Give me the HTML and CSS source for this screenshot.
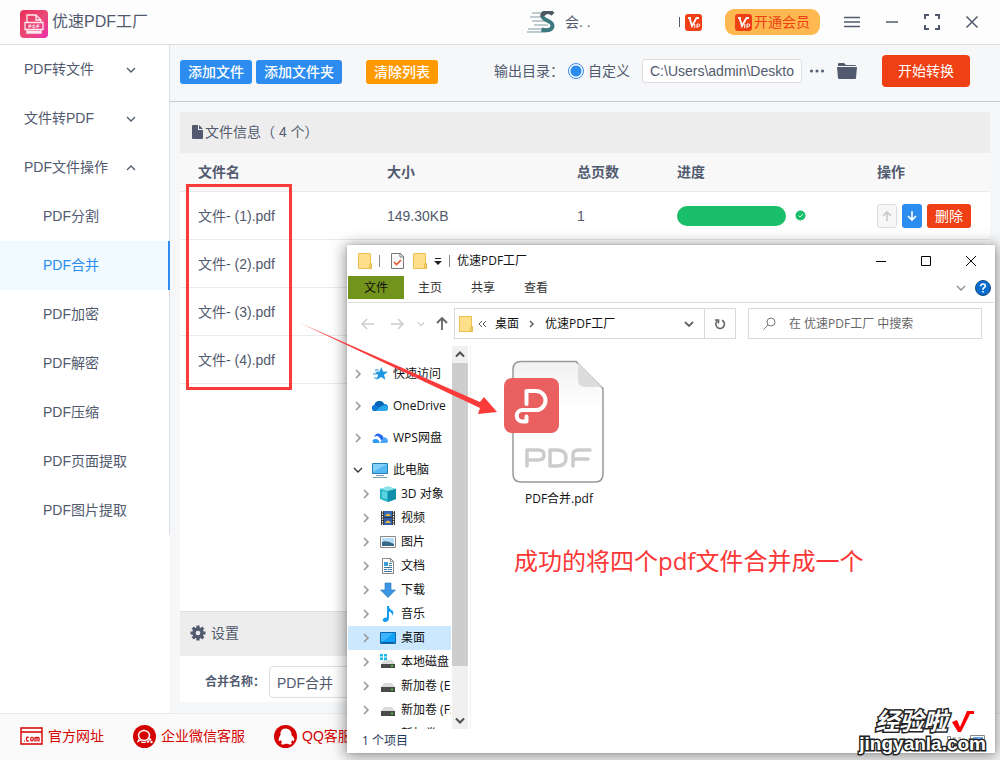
FILE: index.html
```html
<!DOCTYPE html>
<html lang="zh-CN">
<head>
<meta charset="utf-8">
<meta name="viewport" content="width=device-width, initial-scale=1">
<title>优速PDF工厂</title>
<link rel="stylesheet" href="styles.css">
</head>
<body>
<svg class="defs" aria-hidden="true">
  <defs>
    <linearGradient id="logo-bg" x1="0" y1="0" x2="1" y2="1"><stop offset="0" stop-color="#e8305a"/><stop offset=".55" stop-color="#ea4a78"/><stop offset="1" stop-color="#f02cae"/></linearGradient>
    <linearGradient id="paper" x1="0" y1="0" x2="0" y2="1"><stop offset="0" stop-color="#f1f1f1"/><stop offset=".4" stop-color="#fff"/></linearGradient>
    <symbol id="down" viewBox="0 0 10 10"><path d="M1 3l4 4 4-4" fill="none" stroke="currentColor" stroke-width="1.3"/></symbol>
    <symbol id="right" viewBox="0 0 10 10"><path d="M3 1l4 4-4 4" fill="none" stroke="currentColor" stroke-width="1.6"/></symbol>
    <symbol id="folder" viewBox="0 0 14 16"><path d="M.5.5h12v10h1v5H.5z" fill="#ffe08a" stroke="#ecc04f"/><path d="M11.500 11v4h2v-4z" fill="#f5cf68" stroke="#e3b23c" stroke-width=".6"/></symbol>
    <symbol id="vip" viewBox="0 0 17 17"><rect width="17" height="17" rx="3" fill="#ee4014"/><path d="M3 4h3M4.500 4l2.500 8L11.500 4H14" fill="none" stroke="#fff" stroke-width="1.800"/><path d="M9.700 10v4M12 14v-4h1.500a1 1 0 010 2.400H12" fill="none" stroke="#fff" stroke-width="1"/></symbol>
    <symbol id="drive" viewBox="0 0 16 16"><path d="M4 5h8l3 4H1z" fill="#dadada"/><path d="M1 9h14v5H1z" fill="#4a4a4a"/><path d="M11 11.500h2" stroke="#3fe046" stroke-width="1.500"/></symbol>
  </defs>
</svg>
<div class="app">
  <header class="header">
    <svg class="logo" viewBox="0 0 28 28"><rect width="28" height="28" rx="4" fill="url(#logo-bg)"/><g fill="none" stroke="#ffe9ee" stroke-width="1.300"><path d="M7 12V5h9l5 5v2M16 5v5h5M5 12.500h18v7H5zM7 19.500v3.500h14v-3.500M7 21.500h14"/></g><path d="M9 18v-3h2v1.500H9m4-1.500v3c3 0 3-3 0-3m4 3v-3h2.500M17 16.500h2" fill="none" stroke="#fff" stroke-width=".8"/></svg>
    <h1 class="app-name">优速PDF工厂</h1>
    <div class="account">
      <svg class="avatar" viewBox="0 0 28 22"><path d="M5 2h14M3 6h13M5 10h14M7 14h14M1 18h22M0 21h18" stroke="#a9bcc2" stroke-width="1.300"/><path d="M26 3C22-.5 15 1 15.500 5.500c.5 4 10.500 4.500 10 9.500-.4 4.500-6.500 5-11 3.500" fill="none" stroke="#3d7a80" stroke-width="4"/><path d="M26 3C22-.5 15 1 15.500 5.500" fill="none" stroke="#4d5960" stroke-width="4"/></svg>
      <span class="user">会. .</span>
      <span class="user-end"></span>
      <svg class="vip" viewBox="0 0 17 17"><use href="#vip"/></svg>
    </div>
    <button class="member"><svg class="vip" viewBox="0 0 17 17"><use href="#vip"/></svg>开通会员</button>
    <div class="controls">
      <button aria-label="菜单"><svg width="16" height="12" viewBox="0 0 16 12"><path d="M0 1.500h16M0 6h16M0 10.500h16"/></svg></button>
      <button aria-label="最小化"><svg width="14" height="12" viewBox="0 0 14 12"><path d="M1 6h12"/></svg></button>
      <button aria-label="全屏"><svg width="16" height="16" viewBox="0 0 16 16"><path d="M5 1H1v4M11 1h4v4M5 15H1v-4M11 15h4v-4" stroke-width="2"/></svg></button>
      <button aria-label="关闭"><svg width="14" height="14" viewBox="0 0 14 14"><path d="M1.500 1.500l11 11M12.500 1.500l-11 11"/></svg></button>
    </div>
  </header>

  <div class="body">
    <div class="side">
      <nav class="menu">
        <a class="group" href="#">PDF转文件<svg class="chev" viewBox="0 0 10 10"><use href="#down"/></svg></a>
        <a class="group" href="#">文件转PDF<svg class="chev" viewBox="0 0 10 10"><use href="#down"/></svg></a>
        <a class="group" href="#">PDF文件操作<svg class="chev up" viewBox="0 0 10 10"><use href="#down"/></svg></a>
        <a class="item" href="#">PDF分割</a>
        <a class="item active" href="#">PDF合并</a>
        <a class="item" href="#">PDF加密</a>
        <a class="item" href="#">PDF解密</a>
        <a class="item" href="#">PDF压缩</a>
        <a class="item" href="#">PDF页面提取</a>
        <a class="item" href="#">PDF图片提取</a>
      </nav>
    </div>

    <main class="main">
      <div class="toolbar">
        <button class="btn blue">添加文件</button>
        <button class="btn blue">添加文件夹</button>
        <button class="btn orange">清除列表</button>
        <div class="output">
          <span class="output-label">输出目录：</span>
          <label class="custom"><input type="radio" name="dir" checked>自定义</label>
          <input class="path" type="text" aria-label="输出目录" value="C:\Users\admin\Desktop">
          <button class="plain" aria-label="更多"><svg width="16" height="6" viewBox="0 0 16 6" fill="#515a6e"><circle cx="2.500" cy="3" r="1.500"/><circle cx="8" cy="3" r="1.500"/><circle cx="13.500" cy="3" r="1.500"/></svg></button>
          <button class="plain open" aria-label="打开文件夹"><svg width="20" height="18" viewBox="0 0 20 18" fill="#515a6e"><path d="M1 4V2q0-1 1-1h5l2 2h9q1 0 1 1z"/><path d="M0 5h20l-1 11q0 1-1 1H2q-1 0-1-1z"/></svg></button>
        </div>
        <button class="start">开始转换</button>
      </div>

      <div class="content">
        <section class="files">
          <h2 class="bar"><svg width="11" height="14" viewBox="0 0 11 14"><path d="M1 0h5v5h5v8q0 1-1 1H1q-1 0-1-1V1q0-1 1-1zM7 0l4 4H7z" fill="#515a6e"/></svg>文件信息（ 4 个）</h2>
          <table class="table">
            <colgroup><col class="c-name"><col class="c-size"><col class="c-pages"><col class="c-prog"><col></colgroup>
            <thead><tr><th>文件名</th><th>大小</th><th>总页数</th><th>进度</th><th>操作</th></tr></thead>
            <tbody>
              <tr><td>文件- (1).pdf</td><td>149.30KB</td><td>1</td>
                <td><div class="progress"><span class="fill"></span><svg width="11" height="11" viewBox="0 0 11 11"><circle cx="5.500" cy="5.500" r="5" fill="#19be6b"/><path d="M3.500 5.500l1.500 1.500 3-3" fill="none" stroke="#d9f5e6"/></svg></div></td>
                <td><div class="ops">
                  <button class="sq up-btn" disabled aria-label="上移"><svg width="12" height="12" viewBox="0 0 12 12"><path d="M6 11V2M2 6l4-4 4 4"/></svg></button>
                  <button class="sq blue" aria-label="下移"><svg width="12" height="12" viewBox="0 0 12 12"><path d="M6 1v9M2 6l4 4 4-4"/></svg></button>
                  <button class="del">删除</button></div></td></tr>
              <tr><td>文件- (2).pdf</td><td></td><td></td><td></td><td></td></tr>
              <tr><td>文件- (3).pdf</td><td></td><td></td><td></td><td></td></tr>
              <tr><td>文件- (4).pdf</td><td></td><td></td><td></td><td></td></tr>
            </tbody>
          </table>
        </section>
        <section class="settings">
          <h2 class="bar set"><svg width="16" height="16" viewBox="0 0 16 16"><path d="M8 .5v15M.5 8h15M2.700 2.700l10.600 10.600M13.300 2.700L2.700 13.300" stroke="#515a6e" stroke-width="3.200"/><circle cx="8" cy="8" r="4" fill="none" stroke="#515a6e" stroke-width="3.500"/><circle cx="8" cy="8" r="2.300" fill="#ededed"/></svg>设置</h2>
          <div class="field"><label for="merge">合并名称：</label><input id="merge" type="text" value="PDF合并"></div>
        </section>
      </div>
    </main>
  </div>

  <footer class="footer">
    <a href="#"><svg width="23" height="18" viewBox="0 0 23 18"><path d="M1 1h21v16H1zM1 5h21" fill="none" stroke="#d50000" stroke-width="1.400"/><g fill="none" stroke="#d50000" stroke-width="1.200"><path d="M4 14h1M9 10.500Q6.500 9 6.500 12T9 13.700"/><ellipse cx="12" cy="12" rx="1.300" ry="2"/><path d="M15 14.500v-4.500M15 11q1.500-1.500 2 0v3.500M17 11q1.500-1.500 2 0v3.500"/></g></svg>官方网址</a>
    <a href="#"><svg width="23" height="23" viewBox="0 0 23 23"><circle cx="11.500" cy="11.500" r="11.500" fill="#d50000"/><ellipse cx="11" cy="10.500" rx="5.500" ry="5" fill="none" stroke="#fff" stroke-width="1.500"/><path d="M6 14l-1 2.500 3-1.500M8 17q3 1 5 0" fill="none" stroke="#fff" stroke-width="1.200"/><circle cx="17" cy="14.500" r="1.300" fill="#fff"/><circle cx="15" cy="16.500" r="1.200" fill="#fff"/><circle cx="18.500" cy="17" r="1.200" fill="#fff"/></svg>企业微信客服</a>
    <a href="#"><svg width="23" height="23" viewBox="0 0 23 23"><circle cx="11.500" cy="11.500" r="11.500" fill="#d50000"/><path d="M11.500 3.500c-4 0-5.300 3-5 6.500-1.500 2-2.500 5-1.500 6 .6.200 1.200-.5 1.600-1 .3 1 .8 1.800 1.500 2.500-1.500.7-1 2 .4 2 1.500 0 2.500-.3 3-.8h2c.5.500 1.500.8 3 .8 1.400 0 1.900-1.300.4-2 .7-.7 1.200-1.500 1.500-2.500.4.500 1 1.200 1.600 1 1-1 0-4-2.500-6 .3-3.500-2-6.500-6-6.500z" fill="#fff"/></svg>QQ客服</a>
  </footer>

  <section class="window" aria-label="资源管理器">
    <div class="w-title">
      <svg class="fold" viewBox="0 0 14 16"><use href="#folder"/></svg><i class="sep"></i>
      <svg class="doc" width="13" height="16" viewBox="0 0 13 16"><path d="M.5.5h9l3 3v12H.5z" fill="#fafafa" stroke="#777"/><path d="M9 .5V4h3.500" fill="none" stroke="#777"/><path d="M3 9l2.500 2.500L10 7" fill="none" stroke="#e8552d" stroke-width="1.600"/></svg>
      <svg class="fold" viewBox="0 0 14 16"><use href="#folder"/></svg>
      <svg width="8" height="8" viewBox="0 0 8 8"><path d="M1 1h6v1H1zM0 4h8L4 8z" fill="#222"/></svg><i class="sep"></i>
      <span>优速PDF工厂</span>
      <div class="w-btns">
        <button aria-label="最小化"><svg width="12" height="12" viewBox="0 0 12 12"><path d="M1 6.500h10"/></svg></button>
        <button aria-label="最大化"><svg width="12" height="12" viewBox="0 0 12 12"><path d="M1.500 1.500h9v9h-9z"/></svg></button>
        <button aria-label="关闭"><svg width="12" height="12" viewBox="0 0 12 12"><path d="M1 1l10 10M11 1L1 11"/></svg></button>
      </div>
    </div>
    <div class="w-tabs">
      <button class="file-tab">文件</button><button>主页</button><button>共享</button><button>查看</button>
      <svg class="chev ribbon" viewBox="0 0 10 10"><use href="#down"/></svg>
      <svg width="16" height="16" viewBox="0 0 16 16"><circle cx="8" cy="8" r="7.500" fill="#0a6cce" stroke="#174a7c"/><path d="M5.700 6.200q0-2.200 2.300-2.200t2.300 2q0 1.200-1.300 1.800T8 9.800M8 11v1.500" fill="none" stroke="#fff" stroke-width="1.600"/></svg>
    </div>
    <div class="w-address">
      <div class="w-nav">
        <svg width="14" height="12" viewBox="0 0 14 12" stroke="#ccc"><path d="M13 6H1M6 1L1 6l5 5"/></svg>
        <svg width="14" height="12" viewBox="0 0 14 12" stroke="#ccc"><path d="M1 6h12M8 1l5 5-5 5"/></svg>
        <svg width="8" height="8" viewBox="0 0 10 10" stroke="#ccc"><path d="M1 3l4 4 4-4"/></svg>
        <svg width="12" height="13" viewBox="0 0 12 13" stroke="#666"><path d="M6 13V1M1 6l5-5 5 5" stroke-width="1.800"/></svg>
      </div>
      <div class="crumbs"><svg class="fold" viewBox="0 0 14 16"><use href="#folder"/></svg><svg width="9" height="8" viewBox="0 0 9 8"><path d="M4 1L1 4l3 3M8 1L5 4l3 3" fill="none" stroke="#555"/></svg><span>桌面</span><svg class="mini" viewBox="0 0 10 10"><path d="M3 2l3 3-3 3" fill="none" stroke="#555" stroke-width="1.400"/></svg><span>优速PDF工厂</span><svg class="chev drop" viewBox="0 0 10 10"><path d="M1 3l4 4 4-4" fill="none" stroke="#666" stroke-width="1.800"/></svg></div>
      <button class="refresh" aria-label="刷新"><svg width="12" height="12" viewBox="0 0 12 12"><path d="M8 2.300A4.300 4.300 0 113.200 3M1 2h3.500v3.500" fill="none" stroke="#666" stroke-width="1.600"/></svg></button>
      <div class="search"><svg width="13" height="13" viewBox="0 0 13 13"><circle cx="8" cy="5" r="4" fill="none" stroke="#777"/><path d="M5 8l-4.500 4.500" stroke="#777"/></svg><input type="text" aria-label="搜索" placeholder="在 优速PDF工厂 中搜索"></div>
    </div>
    <div class="w-main">
      <ul class="tree">
        <li class="top"><svg class="mini"><use href="#right"/></svg><svg class="ti" viewBox="0 0 16 16"><path d="M9.500 1l1.500 4.500 5 .2-4 3 1.500 5L9 11l-4.500 3 1.500-5-3-3 4.500-.4z" fill="#2196e3"/><path d="M3 4h4M1 8h4M2 12h3" stroke="#2196e3"/></svg>快速访问</li>
        <li class="top"><svg class="mini"><use href="#right"/></svg><svg class="ti" viewBox="0 0 16 16"><path d="M3 13a3 3 0 01-.5-6A5 5 0 0112 6a3.500 3.500 0 011 7z" fill="#0f78d4"/><path d="M4 13l5-5q6-2 7 2 0 3-3 3z" fill="#28a8ea"/><path d="M2.500 7A5 5 0 0112 6L8 9z" fill="#0364b8"/></svg>OneDrive</li>
        <li class="top"><svg class="mini"><use href="#right"/></svg><svg class="ti" viewBox="0 0 16 16"><path d="M1 13q-1.500-4 2.500-4 4 0 4 4z" fill="#2f9bf4"/><path d="M2 7q2-5 6-3 3 1 4 5l3 4q-4 0-5-2L7 7q-2-2-5 0z" fill="#2468f2"/><path d="M8 13l4-6q4 1 4 4 0 2-2 2z" fill="#4aa5fb"/></svg>WPS网盘</li>
        <li><svg class="mini dark"><use href="#down"/></svg><svg class="ti" viewBox="0 0 16 16"><path d="M.5 1.500h15v10H.5z" fill="#56b8f2" stroke="#267eb7"/><path d="M1 2h14L1 10z" fill="#83cff7"/><path d="M4 13.500h8M1 15.500h14" stroke="#8098a8"/></svg>此电脑</li>
        <li class="sub"><svg class="mini"><use href="#right"/></svg><svg class="ti" viewBox="0 0 16 16"><path d="M0 3l8-2.500L16 3v10l-8 3-8-3z" fill="#26b5cc"/><path d="M0 3l8-2.500L16 3 8 5z" fill="#8de3ea"/><path d="M8 5l8-2v10l-8 3z" fill="#118fa8"/><path d="M2 5l5 1v7l-5-1z" fill="#5dd3df"/></svg>3D 对象</li>
        <li class="sub"><svg class="mini"><use href="#right"/></svg><svg class="ti" viewBox="0 0 16 16"><path d="M1 1h14v14H1z" fill="#333"/><path d="M4 1h8v6H4z" fill="#3568b5"/><path d="M4 8h8v7H4z" fill="#365dab"/><path d="M5 6q3-5 6 0zM5 13q3-5 6 0z" fill="#e8bd3e"/><path d="M2.500 1v14M13.500 1v14" stroke="#eee" stroke-width="1.200" stroke-dasharray="1.500 1"/></svg>视频</li>
        <li class="sub"><svg class="mini"><use href="#right"/></svg><svg class="ti" viewBox="0 0 16 16"><path d="M.5 2.500h15v11H.5z" fill="#fff" stroke="#888"/><path d="M2 4h12v8H2z" fill="#b5ddf5"/><path d="M2 8q5-2 12 2v2H2z" fill="#386b87"/></svg>图片</li>
        <li class="sub"><svg class="mini"><use href="#right"/></svg><svg class="ti" viewBox="0 0 16 16"><path d="M2.500.5h8l3 3v12h-11z" fill="#fff" stroke="#888"/><path d="M10.500.5v3h3" fill="none" stroke="#888"/><path d="M4 9.500h8M4 11.500h3M8 11.500h4M4 13.500h8M9 5.500h3M9 7.500h3" stroke="#40799f"/><path d="M4 4h4v4H4z" fill="#38a0dc"/></svg>文档</li>
        <li class="sub"><svg class="mini"><use href="#right"/></svg><svg class="ti" viewBox="0 0 16 16"><path d="M5 1h6v7h4.500L8 15.500.5 8H5z" fill="#3c95e2" stroke="#2473b5" stroke-width=".6"/></svg>下载</li>
        <li class="sub"><svg class="mini"><use href="#right"/></svg><svg class="ti" viewBox="0 0 16 16"><path d="M7 0h2q0 3 4 5 1 2-.5 5Q12 6 9 5.500V13q-1 3-4 3-3-.5-2-3 1-2 4-1.500z" fill="#179cf0"/></svg>音乐</li>
        <li class="sub selected"><svg class="mini"><use href="#right"/></svg><svg class="ti" viewBox="0 0 16 16"><path d="M.5 2.500h15v11H.5z" fill="#14a0f5" stroke="#0b67ad"/><path d="M1 3h12L4 11H1z" fill="#3db4ff"/><path d="M2 12.500h12" stroke="#07599b"/></svg>桌面</li>
        <li class="sub"><svg class="mini"><use href="#right"/></svg><svg class="ti" viewBox="0 0 16 16"><path d="M4 6h8l3 4H1z" fill="#dadada"/><path d="M0 0h3v2.500H0zM4 0h3v2.500H4zM0 3.500h3V6H0zM4 3.500h3V6H4z" fill="#17b8ed"/><path d="M1 10h14v4H1z" fill="#4a4a4a"/><path d="M11 12h2" stroke="#3fe046" stroke-width="1.500"/></svg>本地磁盘</li>
        <li class="sub"><svg class="mini"><use href="#right"/></svg><svg class="ti"><use href="#drive"/></svg>新加卷 (E:)</li>
        <li class="sub"><svg class="mini"><use href="#right"/></svg><svg class="ti"><use href="#drive"/></svg>新加卷 (F:)</li>
        <li class="sub"><svg class="mini"></svg><svg class="ti"></svg>新加卷</li>
      </ul>
      <div class="scroll">
        <svg class="arrow up" viewBox="0 0 10 10"><path d="M1 3l4 4 4-4"/></svg>
        <span class="thumb"></span>
        <svg class="arrow" viewBox="0 0 10 10"><path d="M1 3l4 4 4-4"/></svg>
      </div>
      <div class="pane">
        <figure class="pdf">
          <svg width="104" height="126" viewBox="0 0 104 126">
            <path d="M18 1.500h55l27 27V114q0 8-8 8H18q-8 0-8-8V9.500q0-8 8-8z" fill="url(#paper)" stroke="#999" stroke-width="1.500"/>
            <path d="M75 2.500V20q0 7 7 7h17z" fill="#dcdcdc"/>
            <rect x="1" y="18" width="55" height="55" rx="8" fill="#ea5f5f"/>
            <path d="M23.500 44V31H33a9 9 0 010 19H19.500a5 5 0 000 11.500H23.500v-5" fill="none" stroke="#fff" stroke-width="4" stroke-linecap="round" stroke-linejoin="round"/>
            <g fill="none" stroke="#ccc" stroke-width="3.500" stroke-linecap="round" stroke-linejoin="round"><path d="M24 106V90h11q6 0 6 5t-6 5H24M47 90v16h7q9 0 9-8t-9-8zM70 106V95q0-5 5-5h12M70 99h15"/></g>
          </svg>
          <figcaption>PDF合并.pdf</figcaption>
        </figure>
        <p class="caption">成功的将四个pdf文件合并成一个</p>
      </div>
    </div>
    <div class="w-status">1 个项目
      <div class="views"><svg width="15" height="12" viewBox="0 0 15 12"><path d="M.5 1.500h3v3h-3zM.5 7.500h3v3h-3zM6 3h3M11 3h3M6 9h3M11 9h3" fill="none" stroke="#888"/></svg><svg width="15" height="12" viewBox="0 0 15 12"><path d="M.5.500h14v11H.5z" fill="#fff" stroke="#888"/><path d="M3 2h10v6H3z" fill="#6aaaf2"/></svg></div>
    </div>
  </section>

  <div class="mark-box"></div>
  <svg class="mark-arrow" width="200" height="94" viewBox="0 0 200 94"><path d="M0 0l180 79 4-5 13 15-19 2 2-6z" fill="#fb3a3a"/></svg>
  <div class="watermark">
    <div class="wm-top">经验啦<svg width="26" height="24" viewBox="0 0 26 24"><path d="M2 12l5-2 3 7L17 1h7v3h-4l-9 18H8z" fill="#f00"/></svg></div>
    <div class="wm-url">jingyanla.com</div>
  </div>
</div>
</body>
</html>
```
FILE: styles.css
```css
* { box-sizing: border-box; }
body { margin: 0; color: #515a6e; font: 14px/20px "Liberation Sans", "Noto Sans CJK SC", sans-serif; }
button, input { font: inherit; color: inherit; margin: 0; }
button { border: 0; padding: 0; background: none; white-space: nowrap; }
a { color: inherit; text-decoration: none; }
h1, h2, p, ul, figure { margin: 0; padding: 0; font-weight: 400; }
svg { flex: none; display: block; }
.defs { position: absolute; width: 0; height: 0; }
.app { position: relative; display: flex; flex-direction: column; min-height: 100vh; overflow: hidden; background: #fff; }

.header { display: flex; align-items: center; height: 45px; padding: 0 21px 0 20px; border-bottom: 1px solid #dcdee2; background: #fdfdfd; }
.logo { width: 28px; height: 28px; margin-top: 4px; }
.app-name { margin-left: 4px; font-size: 16px; }
.account { display: flex; align-items: center; margin-left: auto; }
.avatar { width: 28px; height: 22px; margin-right: 10px; }
.user { width: 114px; }
.user-end { width: 1px; height: 10px; margin-right: 5px; background: #515a6e; }
.vip { width: 17px; height: 17px; }
.member { display: flex; align-items: center; gap: 2px; height: 26px; margin: 0 24px 0 23px; padding: 0 10px; border-radius: 9px; background: #ffb850; color: #ee4014; }
.controls { display: flex; align-items: center; gap: 25px; }
.controls svg { fill: none; stroke: #515a6e; stroke-width: 1.5; }

.body { display: flex; flex: 1; }
.side { flex: none; width: 170px; }
.menu { border-right: 1px solid #dcdee2; }
.menu a { display: flex; align-items: center; height: 49px; padding-bottom: 2px; }
.menu .group { padding-left: 24px; padding-right: 33px; justify-content: space-between; }
.item { padding-left: 43px; }
.menu .active { background: #f0faff; color: #2d8cf0; border-right: 2px solid #2d8cf0; margin-right: -1px; }
.chev { width: 10px; height: 10px; }
.group .chev { margin-top: 2px; }
.up { transform: rotate(180deg); }

.main { flex: 1; min-width: 0; display: flex; flex-direction: column; background: #f5f7f9; }
.toolbar { display: flex; align-items: center; height: 57px; padding: 0 30px 4px 10px; border-bottom: 1px solid #c8cacd; }
.btn { height: 24px; margin: 2px 4px 0 0; padding: 0 8px; border-radius: 3px; color: #fff; font-weight: 500; }
.blue { background: #2d8cf0; }
.orange { margin-left: 20px; background: #ff9900; }
.output { display: flex; align-items: center; margin-left: auto; }
.output-label { margin-right: 4px; }
.custom { display: flex; align-items: center; gap: 4px; }
.custom input { appearance: none; width: 16px; height: 16px; border: 1px solid #2d8cf0; border-radius: 50%; background: radial-gradient(circle, #2d8cf0 5px, #fff 6px); }
.path { width: 160px; height: 24px; margin: 0 7px 0 12px; padding: 0 7px; border: 1px solid #dcdee2; border-radius: 3px; background: #fff; }
.open { margin: 0 25px 0 12px; }
.start { width: 88px; height: 32px; border-radius: 4px; background: #ee4014; color: #fff; }

.content { flex: 1; display: flex; flex-direction: column; padding: 10px 10px 11px; }
.files { flex: 1; background: #fff; }
.bar { display: flex; align-items: center; gap: 2px; height: 41px; padding: 0 0 2px 12px; background: #ededed; font-size: 14px; }
.set { gap: 5px; height: 45px; padding-left: 10px; border-top: 1px solid #dcdee2; }
.table { width: 100%; table-layout: fixed; border-collapse: separate; border-spacing: 0; }
.c-name { width: 189px; }
.c-size { width: 190px; }
.c-pages { width: 100px; }
.c-prog { width: 200px; }
.table th { height: 39px; padding: 0 0 0 18px; text-align: left; background: #f8f8f9; border-bottom: 1px solid #e8eaec; }
.table td { height: 48px; padding: 0 0 0 18px; border-bottom: 1px solid #e8eaec; }
.progress, .ops { display: flex; align-items: center; }
.progress { gap: 9px; }
.fill { width: 109px; height: 20px; border-radius: 10px; background: #19be6b; }
.ops { gap: 5px; }
.sq { display: grid; place-items: center; width: 20px; height: 24px; border-radius: 3px; }
.sq svg { fill: none; stroke: #fff; stroke-width: 1.6; }
.up-btn { border: 1px solid #dcdee2; background: #f7f7f7; }
.up-btn svg { stroke: #c5c8ce; }
.del { width: 44px; height: 24px; border-radius: 3px; background: #ee4014; color: #fff; }
.field { display: flex; align-items: center; height: 46px; padding: 6px 0 0 25px; background: #fff; }
.field label { width: 64px; font-size: 12px; font-weight: 700; }
.field input { width: 200px; height: 32px; padding: 0 7px; border: 1px solid #dcdee2; border-radius: 4px; }

.footer { display: flex; align-items: center; gap: 29px; height: 47px; padding: 0 0 2px 20px; border-top: 1px solid #e8eaec; background: #fafafa; color: #d50000; }
.footer a { display: flex; align-items: center; gap: 5px; }

.window { position: absolute; top: 245px; left: 347px; right: 5px; bottom: 7px; display: flex; flex-direction: column; padding: 0 1px; background: #fff; color: #111; font: 12px/16px "Open Sans", "Noto Sans CJK SC", sans-serif; box-shadow: 0 0 2px #8888, 0 2px 14px 2px #0006; }
.w-title { display: flex; align-items: center; height: 31px; padding: 0 17px 0 10px; }
.fold { width: 14px; height: 16px; }
.sep { width: 1px; height: 12px; margin: 0 7px; background: #888; }
.doc { margin: 0 9px 0 4px; }
.w-title .doc + .fold { margin-right: 7px; }
.w-btns { display: flex; gap: 33px; margin-left: auto; }
.w-btns svg { fill: none; stroke: #000; }
.w-tabs { display: flex; align-items: center; height: 27px; padding: 0 3px 3px 0; border-bottom: 1px solid #dadbdc; }
.w-tabs button { height: 23px; margin-left: 29px; color: #333; }
.w-tabs .file-tab { width: 56px; margin: 0; background: #73941c; color: #111; }
.w-tabs .file-tab + button { margin-left: 14px; }
.ribbon { margin: 0 9px 0 auto; color: #888; }
.w-address { display: flex; align-items: center; padding: 5px 12px 7px 13px; }
.w-nav { display: flex; align-items: center; gap: 15px; width: 93px; }
.w-nav svg { fill: none; stroke-width: 1.5; }
.w-nav svg:nth-child(3) { margin-right: -4px; margin-left: -2px; }
.crumbs { flex: 252; display: flex; align-items: center; gap: 8px; height: 31px; padding: 0 10px 0 4px; border: 1px solid #d9d9d9; white-space: nowrap; }
.crumbs .fold { margin-right: -3px; }
.mini { width: 10px; height: 10px; color: #999; }
.drop { margin-left: auto; }
.refresh { display: grid; place-items: center; width: 31px; height: 31px; border: 1px solid #d9d9d9; border-left: 0; }
.search { flex: 234; display: flex; align-items: center; gap: 13px; height: 31px; margin-left: 12px; padding-left: 14px; border: 1px solid #d9d9d9; }
.search input { flex: 1; min-width: 0; padding: 0; border: 0; outline: 0; background: none; }
.search input::placeholder { color: #666; opacity: 1; }
.w-main { flex: 1; min-height: 0; display: flex; }
.tree { flex: none; width: 104px; padding: 16px 1px 0 0; overflow: hidden; list-style: none; }
.tree li { display: flex; align-items: center; gap: 5px; height: 24px; padding-left: 5px; overflow: hidden; white-space: nowrap; }
.tree .mini { margin-right: 4px; }
.tree .dark { color: #333; }
.tree .top { margin-bottom: 8px; }
.tree .sub { padding-left: 13px; }
.tree .selected { background: #cce8ff; }
.ti { width: 16px; height: 16px; }
.scroll { flex: none; display: flex; flex-direction: column; align-items: center; width: 16px; background: #f0f0f0; }
.arrow { width: 10px; height: 17px; fill: none; stroke: #505050; stroke-width: 2; }
.thumb { width: 100%; height: 303px; margin-bottom: auto; background: #cdcdcd; }
.pane { flex: 1; min-width: 0; margin-left: 2px; padding: 14px 0 0 32px; border-left: 1px solid #f0f0f0; }
.pdf { width: 112px; }
.pdf figcaption { padding-top: 5px; text-align: center; }
.caption { margin: 36px 0 0 11px; color: #fb3636; font-size: 24px; line-height: 36px; }
.w-status { display: flex; align-items: center; height: 24px; padding: 0 9px 0 14px; color: #1e395b; }
.views { display: flex; gap: 8px; margin-left: auto; }

.mark-box { position: absolute; top: 184px; left: 186px; width: 106px; height: 206px; border: 3px solid #fb3a3a; }
.mark-arrow { position: absolute; top: 323px; left: 300px; }
.watermark { position: absolute; right: 14px; bottom: 7px; color: #fff; font-weight: 700; font-family: "Liberation Sans", "Noto Sans CJK SC", sans-serif; -webkit-text-stroke: 3px #222; paint-order: stroke fill; }
.wm-top { display: flex; align-items: center; gap: 3px; padding-left: 16px; font-size: 24px; line-height: 26px; font-style: italic; }
.wm-top svg { -webkit-text-stroke: 0; }
.wm-url { font-size: 19px; line-height: 18px; }
```
